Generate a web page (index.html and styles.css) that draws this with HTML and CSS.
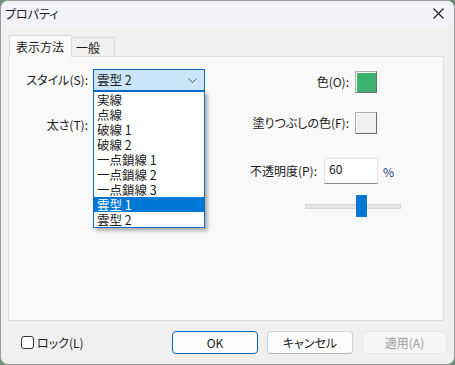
FILE: index.html
```html
<!DOCTYPE html>
<html lang="ja">
<head>
<meta charset="utf-8">
<link rel="stylesheet" href="styles.css">
</head>
<body>
<div class="window">
  <div class="titlebar">
    <span class="title">プロパティ</span>
    <svg class="close" width="11" height="11" viewBox="0 0 11 11"><path d="M0.5 0.5 L10.5 10.5 M10.5 0.5 L0.5 10.5" stroke="#1a1a1a" stroke-width="1.1" fill="none"/></svg>
  </div>
  <div class="tabs">
    <div class="tab active">表示方法</div>
    <div class="tab">一般</div>
  </div>
  <div class="panel">
    <div class="left">
      <div class="field">
        <span class="label">スタイル(S):</span>
        <div class="combo open">
          <span>雲型 2</span>
          <svg class="chev" width="9" height="5" viewBox="0 0 9 5"><path d="M0.5 0.5 L4.5 4.5 L8.5 0.5" stroke="#555" stroke-width="1" fill="none"/></svg>
          <ul class="list">
            <li>実線</li>
            <li>点線</li>
            <li>破線 1</li>
            <li>破線 2</li>
            <li>一点鎖線 1</li>
            <li>一点鎖線 2</li>
            <li>一点鎖線 3</li>
            <li class="sel">雲型 1</li>
            <li>雲型 2</li>
          </ul>
        </div>
      </div>
      <div class="field second">
        <span class="label">太さ(T):</span>
        <div class="combo hidden"></div>
      </div>
    </div>
    <div class="right">
      <div class="row color-row">
        <span class="label">色(O):</span>
        <span class="swatch green"></span>
      </div>
      <div class="row color-row fill-row">
        <span class="label">塗りつぶしの色(F):</span>
        <span class="swatch"></span>
      </div>
      <div class="row opacity-row">
        <span class="label">不透明度(P):</span>
        <span class="input">60</span>
        <span class="pct">%</span>
      </div>
      <div class="row slider-row">
        <div class="slider"><div class="track"></div><div class="thumb"></div></div>
      </div>
    </div>
  </div>
  <div class="footer">
    <label class="check"><span class="box"></span><span>ロック(L)</span></label>
    <div class="buttons">
      <span class="btn default">OK</span>
      <span class="btn">キャンセル</span>
      <span class="btn disabled">適用(A)</span>
    </div>
  </div>
</div>
</body>
</html>
```
FILE: styles.css
```css
html, body {
  margin: 0;
  padding: 0;
  background: #6f8f7a;
}
body {
  width: 455px;
  height: 365px;
  overflow: hidden;
  font-family: "Noto Sans CJK JP", "Noto Sans", sans-serif;
  font-size: 12px;
  font-feature-settings: "palt";
  color: #1b1b1b;
}
.window {
  box-sizing: border-box;
  width: 455px;
  height: 365px;
  border: 1px solid #9a9a9a;
  border-radius: 8px;
  background: #f0f0f0;
  overflow: hidden;
  display: flex;
  flex-direction: column;
}
.titlebar {
  height: 25px;
  flex: none;
  background: #f1f3f8;
  display: flex;
  align-items: center;
  padding-left: 4px;
  padding-right: 10px;
}
.title {
  line-height: 14px;
  flex: 1;
}
.close {
  display: block;
}
.tabs {
  display: flex;
  align-items: flex-end;
  margin: 9px 0 0 8px;
  height: 21px;
  position: relative;
  z-index: 2;
}
.tab {
  box-sizing: border-box;
  height: 19px;
  padding: 0 0 0 5px;
  border: 1px solid #d9d9d9;
  border-bottom: none;
  background: #f0f0f0;
  line-height: 19px;
  white-space: nowrap;
}
.tab.active {
  height: 22px;
  margin-bottom: -1px;
  width: 62px;
  background: #f9f9f9;
  border-right: none;
  padding: 0 0 0 6px;
  line-height: 21px;
}
.tab:not(.active) {
  width: 44px;
  padding-left: 4px;
}
.panel {
  box-sizing: border-box;
  height: 265px;
  margin: 0 10px 0 7px;
  border: 1px solid #dcdcdc;
  background: #f9f9f9;
  display: flex;
  position: relative;
  z-index: 1;
}
.left {
  padding-top: 12px;
}
.field {
  display: grid;
  grid-template-columns: 79px 112px;
  column-gap: 5px;
  align-items: center;
}
.field.second {
  margin-top: 23px;
}
.label {
  text-align: right;
  line-height: 14px;
  white-space: nowrap;
}
.combo {
  box-sizing: border-box;
  height: 22px;
  border: 1px solid #0a69c4;
  background: #cce4f7;
  position: relative;
  display: flex;
  align-items: center;
  padding-left: 3px;
  line-height: 14px;
  font-size: 12.5px;
}
.combo.hidden {
  visibility: hidden;
}
.combo span {
  flex: 1;
}
.chev {
  margin-right: 7px;
  display: block;
}
.list {
  position: absolute;
  top: 21px;
  left: -1px;
  width: 112px;
  box-sizing: border-box;
  margin: 0;
  padding: 0;
  list-style: none;
  background: #fff;
  border: 1px solid #0a69c4;
  box-shadow: 3px 3px 3px rgba(0, 0, 0, 0.28);
  z-index: 5;
  font-size: 12.5px;
}
.list li {
  height: 15px;
  line-height: 15px;
  padding-left: 3px;
  white-space: nowrap;
}
.list li.sel {
  background: #0078d7;
  color: #fff;
}
.right {
  flex: 1;
  padding-top: 14px;
  display: flex;
  flex-direction: column;
  align-items: flex-end;
}
.row {
  display: flex;
  align-items: center;
}
.color-row {
  margin-right: 66px;
}
.color-row .label {
  margin-right: 6px;
}
.fill-row {
  margin-top: 19px;
}
.swatch {
  box-sizing: border-box;
  width: 22px;
  height: 22px;
  border: 1px solid #adadad;
  border-right-color: #6d6d6d;
  border-bottom-color: #6d6d6d;
  background: #f0f0f0;
  box-shadow: inset 1px 1px 0 #fff;
}
.swatch.green {
  background: #3cb371;
}
.opacity-row {
  margin-top: 24px;
  margin-right: 45px;
}
.opacity-row .label {
  margin-right: 7px;
}
.input {
  box-sizing: border-box;
  width: 54px;
  height: 26px;
  background: #fff;
  border: 1px solid #e3e3e3;
  border-bottom-color: #8a8a8a;
  padding: 3px 0 0 4px;
  line-height: 14px;
}
.pct {
  width: 15px;
  margin-left: 5px;
  color: #1d3f73;
}
.slider-row {
  margin-top: 11px;
  margin-right: 42px;
}
.slider {
  width: 96px;
  height: 22px;
  position: relative;
  display: flex;
  align-items: center;
}
.track {
  width: 100%;
  height: 3px;
  background: #e6e6e6;
  border: 1px solid #d6d6d6;
  box-sizing: content-box;
}
.thumb {
  position: absolute;
  left: 51px;
  top: 0;
  width: 11px;
  height: 22px;
  background: #0078d4;
}
.footer {
  display: flex;
  align-items: center;
  margin-top: 10px;
  height: 23px;
  padding: 0 7px 0 20px;
}
.check {
  display: flex;
  align-items: center;
  line-height: 14px;
}
.box {
  box-sizing: border-box;
  width: 13px;
  height: 13px;
  border: 1px solid #333;
  border-radius: 3px;
  background: #fff;
  margin-right: 3px;
}
.buttons {
  margin-left: auto;
  display: flex;
  gap: 9px;
}
.btn {
  box-sizing: border-box;
  width: 86px;
  height: 23px;
  border: 1px solid #d0d0d0;
  border-bottom-color: #b5b5b5;
  border-radius: 4px;
  background: #fdfdfd;
  display: flex;
  align-items: center;
  justify-content: center;
  line-height: 14px;
}
.btn.default {
  border: 1px solid #0067c0;
}
.btn.disabled {
  width: 85px;
  background: #f5f5f5;
  border-color: #e5e5e5;
  color: #9d9d9d;
}
```
